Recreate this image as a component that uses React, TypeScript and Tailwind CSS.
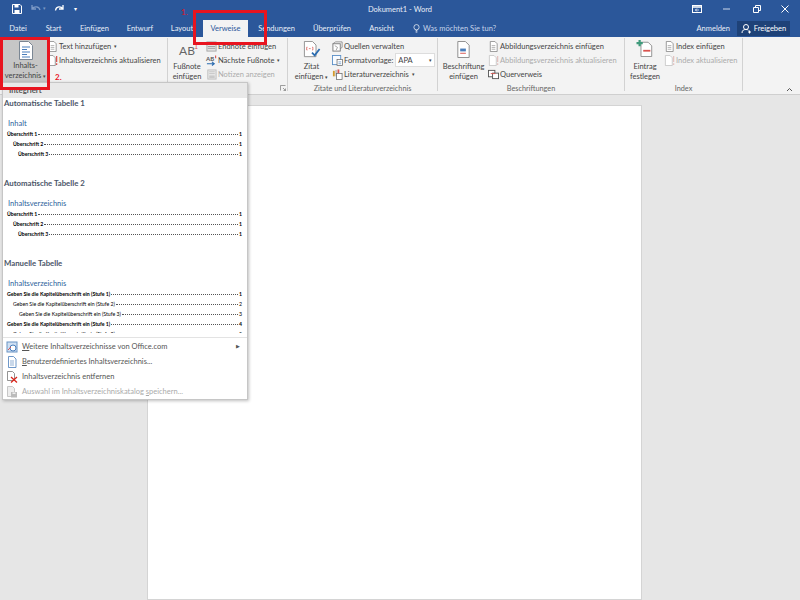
import React from "react";

const Doc = ({ c = "#7a7a7a", s = 11 }: { c?: string; s?: number }) => (
  <svg width={s} height={s} viewBox="0 0 12 12" fill="none" className="shrink-0">
    <path d="M2.500.5h5l2.500 2.500v8.500h-7.500z" fill="#fff" stroke={c} strokeWidth=".8" />
    <path d="M4 5h4M4 7h4M4 9h4" stroke={c} strokeWidth=".6" />
  </svg>
);
const DocBang = ({ dim }: { dim?: boolean }) => (
  <svg width="11" height="11" viewBox="0 0 12 12" fill="none" className="shrink-0">
    <path d="M1.500.5h5l2.500 2.500v8.500h-7.500z" fill="#fff" stroke={dim ? "#bdbdbd" : "#7a7a7a"} strokeWidth=".8" />
    <path d="M10.500 1v6.500M10.500 9v2" stroke={dim ? "#e3c2c0" : "#d9534f"} strokeWidth="1.400" />
  </svg>
);
const Endnote = () => (
  <svg width="11" height="11" viewBox="0 0 12 12" fill="none" className="shrink-0">
    <rect x="1" y="1" width="10" height="10" fill="#e4e4e4" stroke="#a5a5a5" />
    <path d="M2 6h8M2 8h8" stroke="#8a8a8a" strokeWidth=".8" />
    <path d="M3 3h4" stroke="#4a7ebb" />
  </svg>
);
const NextNote = () => (
  <span className="relative w-[11px] h-[11px] shrink-0 block text-[6px] leading-[7px] font-bold text-[#555]">
    AB
    <svg width="11" height="11" viewBox="0 0 12 12" fill="none" className="absolute left-0 top-0">
      <path d="M10.500 .5v3" stroke="#d9534f" strokeWidth="1.200" />
      <path d="M1 9.500h8M6.500 7.500l2.500 2-2.500 2" stroke="#2b6cb0" strokeWidth="1.200" />
    </svg>
  </span>
);
const Notes = () => (
  <svg width="11" height="11" viewBox="0 0 12 12" fill="none" className="shrink-0">
    <rect x="2" y="1" width="9" height="10" fill="#e9e9e9" stroke="#bdbdbd" />
    <rect x="3.500" y="7" width="6" height="3" fill="#c9c9c9" />
    <path d="M3.500 3h6M3.500 5h6" stroke="#c4c4c4" />
  </svg>
);
const Sources = () => (
  <svg width="11" height="11" viewBox="0 0 12 12" fill="none" className="shrink-0">
    <path d="M1 3l3-2h7v6l-3 2" stroke="#8a8a8a" fill="#fff" />
    <rect x="1" y="3" width="8" height="8" fill="#fff" stroke="#777" />
    <path d="M3 5l3 2-1.500 3" stroke="#777" strokeWidth=".7" />
  </svg>
);
const Style = () => (
  <svg width="11" height="11" viewBox="0 0 12 12" fill="none" className="shrink-0">
    <rect x=".5" y=".5" width="9" height="10" fill="#f8fbff" stroke="#5b8fc7" />
    <rect x="5.500" y="5" width="6" height="6.500" fill="#fff" stroke="#666" strokeWidth=".8" />
    <path d="M7 7.500h3M7 9.500h3" stroke="#4a7ebb" strokeWidth=".7" />
  </svg>
);
const Books = () => (
  <svg width="11" height="11" viewBox="0 0 12 12" fill="none" className="shrink-0">
    <rect x="1" y="2" width="2" height="6" fill="#d39a2e" />
    <rect x="3.500" y="1" width="2" height="7" fill="#c0c0c0" />
    <rect x="6" y="0.500" width="2" height="4" fill="#d9534f" />
    <rect x="5" y="5" width="6" height="6.500" fill="#fff" stroke="#666" strokeWidth=".8" />
  </svg>
);
const CrossRef = () => (
  <svg width="11" height="11" viewBox="0 0 12 12" fill="none" className="shrink-0">
    <rect x=".5" y="1.500" width="7" height="7" fill="#fff" stroke="#555" />
    <rect x="5" y="4.500" width="6.500" height="6" fill="#fff" stroke="#555" />
    <path d="M3 5h5" stroke="#d9534f" />
  </svg>
);
const Small = ({ t, dim, icon, caret }: { t: string; dim?: boolean; icon: React.ReactNode; caret?: boolean }) => (
  <div className={`flex items-center gap-[1px] h-[14px] whitespace-nowrap ${dim ? "text-[#ababab]" : "text-[#444]"}`}>
    {icon}
    <span>{t}</span>
    {caret && <span className="text-[5px] ml-[2px]">▾</span>}
  </div>
);
const Group = ({ w, label, children, launcher }: { w: string; label?: string; children: React.ReactNode; launcher?: boolean }) => (
  <div className={`${w} relative flex flex-col h-[53px] mt-[1px] border-r border-[#d2d2d2] shrink-0`}>
    <div className="flex-1 flex min-h-0">{children}</div>
    <div className="h-[12px] mb-[-3px] text-center text-[7.300px] leading-[13px] text-[#666]">{label}</div>
    {launcher && (
      <svg width="6" height="6" viewBox="0 0 6 6" className="absolute right-[1px] bottom-0">
        <path d="M.5 5.500v-5h5M3 3l2.500 2.500M5.500 3.500v2h-2" stroke="#777" fill="none" strokeWidth=".7" />
      </svg>
    )}
  </div>
);
const Toc = ({ title, items, bold }: { title: string; items: [string, number, string, boolean?][]; bold?: boolean }) => (
  <div className="pl-[4px] pr-[5px]">
    <div className="pl-[1px] text-[#2e5f9b] text-[7.500px] leading-[10px]">{title}</div>
    {items.map(([t, ind, n, b], i) => (
      <div key={i} className={`flex items-baseline h-[10px] text-[5.200px] leading-[10px] text-black ${b || !bold ? "font-bold" : "font-normal"}`} style={{ paddingLeft: ind }}>
        <span className="whitespace-nowrap">{t}</span>
        <span className="flex-1 mx-[1px] border-b border-dotted border-[#555] translate-y-[-1px]" />
        <span>{n}</span>
      </div>
    ))}
  </div>
);
const Auto: [string, number, string][] = [["Überschrift 1", 0, "1"], ["Überschrift 2", 6, "1"], ["Überschrift 3", 11, "1"]];

const tabs: [string, string][] = [
  ["Datei", "w-[36px]"], ["Start", "w-[35px]"], ["Einfügen", "w-[47px]"], ["Entwurf", "w-[44px]"], ["Layout", "w-[40px]"],
];
const Heading = ({ t }: { t: string }) => (
  <div className="pl-[1px] mb-[11px] text-[7.800px] leading-[10px] font-bold text-[#4a5568] whitespace-nowrap">{t}</div>
);

export default function App() {
  return (
    <div className="relative w-[800px] h-[600px] overflow-hidden bg-[#e6e6e6] flex flex-col text-[7.500px]" style={{ fontFamily: 'Lato,"Noto Sans",sans-serif' }}>
      <div className="h-[37px] bg-[#2b579a] shrink-0 flex flex-col text-white">
        <div className="h-[20px] flex items-center relative pb-[3px]">
          <svg width="10" height="10" viewBox="0 0 10 10" className="ml-[12px]" fill="none">
            <path d="M.5.5h7.500l1.500 1.500v7.500h-9z" stroke="#fff" />
            <rect x="2.500" y="1" width="4" height="2.500" fill="#fff" />
            <rect x="2.500" y="6" width="5" height="3.500" fill="#fff" />
          </svg>
          <svg width="12" height="10" viewBox="0 0 12 10" className="ml-[8px]" fill="none">
            <path d="M2 1v4h4M2 5c2-3 7-3 8 1" stroke="#7d9ac6" strokeWidth="1.300" />
          </svg>
          <span className="text-[5px] text-[#7d9ac6] ml-[1px]">▾</span>
          <svg width="11" height="10" viewBox="0 0 11 10" className="ml-[8px]" fill="none">
            <path d="M9 1v4H5M9 5C7 2 2 2 1.500 6.500" stroke="#fff" strokeWidth="1.300" />
          </svg>
          <span className="text-[6px] ml-[9px] leading-none">▾</span>
          <div className="absolute left-0 right-0 top-[3px] text-center text-[7.500px] leading-[14px] text-[#e8eef7]">Dokument1 - Word</div>
          <div className="ml-auto flex items-center">
            <svg width="10" height="8" viewBox="0 0 10 8" fill="none" className="mr-[21px]">
              <rect x=".5" y=".5" width="9" height="7" stroke="#fff" />
              <path d="M.5 2h9" stroke="#fff" strokeWidth="1.500" />
              <path d="M3 5h4M5 3.500L3.500 5 5 6.500" stroke="#fff" strokeWidth=".7" />
            </svg>
            <svg width="8" height="2" viewBox="0 0 8 2" className="mr-[22px]"><path d="M0 1h7" stroke="#cfdaeb" /></svg>
            <svg width="8" height="8" viewBox="0 0 8 8" fill="none" className="mr-[20px]">
              <path d="M.5 2.500h5v5h-5zM2.500 2.500v-2h5v5h-2" stroke="#fff" />
            </svg>
            <svg width="8" height="8" viewBox="0 0 8 8" className="mr-[11px]"><path d="M.5.5l7 7M7.500.5l-7 7" stroke="#fff" /></svg>
          </div>
        </div>
        <div className="h-[17px] flex items-end text-[7.500px] relative">
          {tabs.map(([t, w]) => (
            <div key={t} className={`${w} h-[17px] leading-[17px] text-center text-[#e8eef7]`}>{t}</div>
          ))}
          <div className="w-[45px] h-[17px] leading-[17px] text-center bg-[#f3f3f3] text-[#2b579a] ml-[1px]">Verweise</div>
          <div className="w-[61px] ml-[-2px] leading-[17px] text-center text-[#e8eef7] h-[17px]">Sendungen</div>
          <div className="w-[54px] ml-[-2px] leading-[17px] text-center text-[#e8eef7] h-[17px]">Überprüfen</div>
          <div className="w-[45px] leading-[17px] text-center h-[17px] text-[#e8eef7]">Ansicht</div>
          <div className="flex items-center h-[17px] gap-[3px] text-[#c4d2e8] ml-[9px]">
            <svg width="7" height="11" viewBox="0 0 8 11" fill="none"><circle cx="4" cy="4" r="3" stroke="#fff" strokeWidth=".8" /><path d="M3 8h2M3 9.500h2" stroke="#fff" /></svg>
            <span>Was möchten Sie tun?</span>
          </div>
          <div className="ml-auto h-[17px] leading-[17px] text-[#e8eef7] mr-[7px]">Anmelden</div>
          <div className="h-[15px] mb-[1px] w-[53px] bg-[#1e4278] flex items-center justify-center gap-[2px] mr-[10px] text-white">
            <svg width="11" height="11" viewBox="0 0 11 11" fill="none"><circle cx="5" cy="4" r="2.500" stroke="#fff" /><path d="M1 10c0-3 2-3.500 4-3.500 1 0 2 .2 2.500.8M8.500 7.500v3M7 9h3" stroke="#fff" /></svg>
            <span>Freigeben</span>
          </div>
        </div>
      </div>

      <div className="h-[57px] bg-[#f3f3f3] border-b border-[#cfcfcf] shrink-0 flex text-[7.500px] leading-[11px] text-[#444] box-content">
        <Group w="w-[168px]">
          <div className="w-[47px] h-[44px] ml-[2px] bg-[#c6c6c6] flex flex-col items-center">
            <svg width="16" height="19" viewBox="0 0 16 19" fill="none" className="mt-[3px]">
              <path d="M1.500.5h9l4 4v14h-13z" fill="#fff" stroke="#7b8794" />
              <path d="M4 6h8M4 8.500h5M4 11h8M4 13.500h5M4 16h8" stroke="#4a7ebb" />
            </svg>
            <div className="text-center leading-[10px] mt-[1px]">Inhalts-</div>
            <div className="whitespace-nowrap leading-[10px]">verzeichnis <span className="text-[5px]">▾</span></div>
          </div>
          <div className="mt-[1px] ml-[-2px] text-[7.500px]">
            <Small t="Text hinzufügen" icon={<Doc />} caret />
            <Small t="Inhaltsverzeichnis aktualisieren" icon={<DocBang />} />
          </div>
        </Group>
        <Group w="w-[120px]" launcher>
          <div className="w-[36px] flex flex-col items-center ml-[1px]">
            <div className="h-[18px] mt-[4px] relative text-[12px] leading-[18px] text-[#666]">AB<span className="absolute text-[7px] text-[#d9534f] leading-none top-[1px] right-[-3px]">1</span></div>
            <div className="text-center leading-[10px] mt-[2px]">Fußnote einfügen</div>
          </div>
          <div className="ml-[1px] mt-[1px]">
            <Small t="Endnote einfügen" icon={<Endnote />} />
            <Small t="Nächste Fußnote" icon={<NextNote />} caret />
            <Small t="Notizen anzeigen" dim icon={<Notes />} />
          </div>
        </Group>
        <Group w="w-[150px]" label="Zitate und Literaturverzeichnis">
          <div className="w-[41px] flex flex-col items-center ml-[3px]">
            <svg width="20" height="19" viewBox="0 0 20 19" fill="none" className="mt-[3px]">
              <path d="M1.500.5h9l4 4v13h-13z" fill="#fff" stroke="#8a8a8a" />
              <path d="M5 7H4v3h1M10 7h1v3h-1M6.500 8.500h2" stroke="#d9534f" strokeWidth=".8" />
              <path d="M10 13l3 3 5.500-7" stroke="#2b6cb0" strokeWidth="2" />
            </svg>
            <div className="leading-[10px] mt-[4px]">Zitat</div>
            <div className="leading-[10px] whitespace-nowrap">einfügen <span className="text-[5px]">▾</span></div>
          </div>
          <div className="mt-[1px]">
            <Small t="Quellen verwalten" icon={<Sources />} />
            <div className="flex items-center gap-[1px] h-[14px] whitespace-nowrap">
              <Style />
              <span>Formatvorlage:</span>
              <div className="w-[40px] h-[14px] bg-white border border-[#ddd] ml-[1px] flex items-center justify-between px-[2px]">
                <span>APA</span><span className="text-[5px]">▾</span>
              </div>
            </div>
            <Small t="Literaturverzeichnis" icon={<Books />} caret />
          </div>
        </Group>
        <Group w="w-[187px]" label="Beschriftungen">
          <div className="w-[49px] flex flex-col items-center ml-[1px]">
            <svg width="15" height="18" viewBox="0 0 15 18" fill="none" className="mt-[3px]">
              <path d="M1.500.5h8l4 4v13h-12z" fill="#fff" stroke="#8a8a8a" />
              <rect x="4" y="8" width="6" height="3" fill="#4a7ebb" />
              <path d="M4 13h6" stroke="#d9534f" />
            </svg>
            <div className="text-center leading-[10px] mt-[4px]">Beschriftung einfügen</div>
          </div>
          <div className="mt-[1px]">
            <Small t="Abbildungsverzeichnis einfügen" icon={<Doc />} />
            <Small t="Abbildungsverzeichnis aktualisieren" dim icon={<DocBang dim />} />
            <Small t="Querverweis" icon={<CrossRef />} />
          </div>
        </Group>
        <Group w="w-[118px]" label="Index">
          <div className="w-[38px] flex flex-col items-center ml-[1px]">
            <svg width="20" height="19" viewBox="0 0 20 19" fill="none" className="mt-[2px]">
              <path d="M5.500 2.500h8l4 4v12h-12z" fill="#fff" stroke="#8a8a8a" />
              <path d="M4 0v7M.5 3.500h7" stroke="#3f9a7b" strokeWidth="2.500" />
              <path d="M8 12h8" stroke="#d9534f" strokeWidth="2" />
            </svg>
            <div className="text-center leading-[10px] mt-[5px]">Eintrag festlegen</div>
          </div>
          <div className="mt-[1px]">
            <Small t="Index einfügen" icon={<Doc />} />
            <Small t="Index aktualisieren" dim icon={<DocBang dim />} />
          </div>
        </Group>
        <svg width="7" height="5" viewBox="0 0 7 5" fill="none" className="ml-auto mr-[7px] mt-[50px]"><path d="M1 4l2.500-2.500L6 4" stroke="#555" /></svg>
      </div>

      <div className="flex-1 pt-[10px] pl-[147px] min-h-0">
        <div className="w-[495px] h-full bg-white border border-[#d4d4d4]" />
      </div>

      <div className="absolute left-[2px] top-[82px] w-[246px] h-[318px] bg-white border border-[#c6c6c6] shadow-[1px_1px_3px_rgba(0,0,0,0.25)] flex flex-col">
        <div className="h-[15px] bg-[#e9e9e9] text-[7.800px] leading-[15px] font-bold text-[#555] pl-[6px] shrink-0">Integriert</div>
        <div className="flex-1 overflow-hidden min-h-0 mb-[4px]">
          <Heading t="Automatische Tabelle 1" />
          <Toc title="Inhalt" items={Auto} />
          <div className="h-[19px]" />
          <Heading t="Automatische Tabelle 2" />
          <Toc title="Inhaltsverzeichnis" items={Auto} />
          <div className="h-[19px]" />
          <Heading t="Manuelle Tabelle" />
          <Toc bold title="Inhaltsverzeichnis" items={[
            ["Geben Sie die Kapitelüberschrift ein (Stufe 1)", 0, "1", true],
            ["Geben Sie die Kapitelüberschrift ein (Stufe 2)", 6, "2"],
            ["Geben Sie die Kapitelüberschrift ein (Stufe 3)", 12, "3"],
            ["Geben Sie die Kapitelüberschrift ein (Stufe 1)", 0, "4", true],
            ["Geben Sie die Kapitelüberschrift ein (Stufe 2)", 6, "5"],
          ]} />
        </div>
        <div className="shrink-0 border-t border-[#e3e3e3] text-[7.500px] text-[#555] pt-[1px]">
          <div className="h-[15px] flex items-center pl-[3px]">
            <svg width="12" height="12" viewBox="0 0 12 12" fill="none" className="shrink-0"><rect x="1" y="1" width="10" height="10" fill="#cfe0f3" stroke="#6a94c4" /><circle cx="7" cy="7" r="3" fill="#fff" stroke="#4a7ebb" /><path d="M2 9l3-3" stroke="#d9534f" /></svg>
            <span className="ml-[4px] whitespace-nowrap"><u>W</u>eitere Inhaltsverzeichnisse von Office.com</span>
            <span className="ml-auto mr-[7px] text-[5px]">▶</span>
          </div>
          <div className="h-[15px] flex items-center pl-[3px]">
            <Doc c="#4a7ebb" s={12} />
            <span className="ml-[4px] whitespace-nowrap"><u>B</u>enutzerdefiniertes Inhaltsverzeichnis...</span>
          </div>
          <div className="h-[15px] flex items-center pl-[3px]">
            <svg width="12" height="12" viewBox="0 0 12 12" fill="none" className="shrink-0"><path d="M1.500.5h5l2 2v7h-7z" fill="#fff" stroke="#777" strokeWidth=".8" /><path d="M5 6l6 5.500M11 6l-6 5.500" stroke="#d9261c" strokeWidth="1.300" /></svg>
            <span className="ml-[4px] whitespace-nowrap">Inhaltsverzeichnis ent<u>f</u>ernen</span>
          </div>
          <div className="h-[15px] flex items-center pl-[3px] text-[#aaa]">
            <svg width="12" height="12" viewBox="0 0 12 12" fill="none" className="shrink-0"><path d="M1.500.5h5l2 2v8h-7z" fill="#eee" stroke="#bbb" strokeWidth=".8" /><rect x="5" y="6" width="6" height="5.500" fill="#bbb" /><rect x="6.500" y="6.500" width="3" height="1.500" fill="#eee" /></svg>
            <span className="ml-[4px] whitespace-nowrap">Auswahl im Inhaltsverzeichniskatalog <u>s</u>peichern...</span>
          </div>
        </div>
      </div>

      <div className="absolute left-[193px] top-[10px] w-[74px] h-[35px] border-[3px] border-[#e8141f]" />
      <div className="absolute left-0 top-[37px] w-[50px] h-[53px] border-[3px] border-[#e8141f]" />
      <div className="absolute left-[181px] top-[6px] text-[8px] text-[#e8141f]">1.</div>
      <div className="absolute left-[55px] top-[71px] text-[8px] font-bold text-[#e8141f]">2.</div>
    </div>
  );
}
